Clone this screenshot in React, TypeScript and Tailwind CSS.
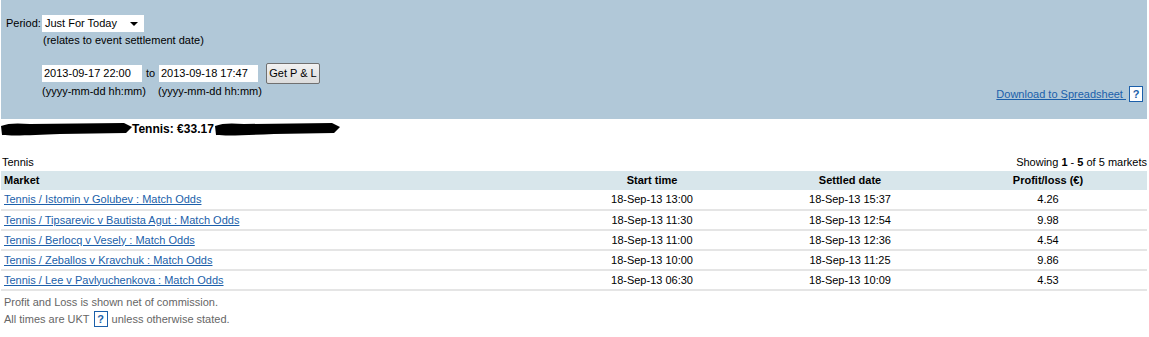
import React from 'react';

const rows = [
  { market: 'Tennis / Istomin v Golubev : Match Odds', start: '18-Sep-13 13:00', settled: '18-Sep-13 15:37', pl: '4.26' },
  { market: 'Tennis / Tipsarevic v Bautista Agut : Match Odds', start: '18-Sep-13 11:30', settled: '18-Sep-13 12:54', pl: '9.98' },
  { market: 'Tennis / Berlocq v Vesely : Match Odds', start: '18-Sep-13 11:00', settled: '18-Sep-13 12:36', pl: '4.54' },
  { market: 'Tennis / Zeballos v Kravchuk : Match Odds', start: '18-Sep-13 10:00', settled: '18-Sep-13 11:25', pl: '9.86' },
  { market: 'Tennis / Lee v Pavlyuchenkova : Match Odds', start: '18-Sep-13 06:30', settled: '18-Sep-13 10:09', pl: '4.53' },
];

const HelpBox: React.FC = () => (
  <span className="inline-flex h-[16px] w-[14px] items-center justify-center border border-[#1b5faa] bg-white text-[11px] font-bold leading-none text-[#1b5faa]">
    ?
  </span>
);

// redacted ink marks over the account name
const Scribble: React.FC<{ width: number }> = ({ width }) => (
  <svg width={width} height="15" viewBox={`0 0 ${width} 15`} className="block">
    <path
      d={`M1 4 C 8 1, 18 1, 30 2 L ${width - 8} 1 L ${width} 5 L ${width - 6} 11 L 60 12 C 35 13, 15 14, 2 13 Z`}
      fill="#000"
    />
  </svg>
);

export default function App() {
  return (
    <div className="w-[1149px] bg-white text-[11px] leading-[13px] text-black" style={{ fontFamily: '"Liberation Sans", Arial, sans-serif' }}>
      <div className="ml-px mr-[2px] h-[119px] bg-[#b1c8d8] pt-[15px]">
        <div className="flex items-center">
          <span className="ml-[5px] w-[36px]">Period:</span>
          <div className="flex h-[17px] w-[102px] items-center justify-between bg-white pl-[3px] pr-[6px]">
            <span>Just For Today</span>
            <svg width="8" height="4" viewBox="0 0 8 4"><path d="M0 0 H8 L4 4 Z" fill="#000" /></svg>
          </div>
        </div>
        <div className="ml-[42px] mt-[2px]">(relates to event settlement date)</div>
        <div className="flex items-end justify-between pr-[4px]">
          <div className="ml-[41px] mt-[16px]">
            <div className="flex items-center">
              <div className="flex h-[17px] w-[100px] items-center bg-white pl-[2px]">2013-09-17 22:00</div>
              <span className="ml-[4px] w-[13px]">to</span>
              <div className="flex h-[17px] w-[99px] items-center bg-white pl-[2px]">2013-09-18 17:47</div>
              <button className="ml-[8px] h-[21px] w-[54px] rounded-[2px] border border-[#707070] bg-gradient-to-b from-[#f2f2f2] to-[#dcdcdc] text-[11px]">
                Get P &amp; L
              </button>
            </div>
            <div className="mt-[1px] flex">
              <span className="w-[116px]">(yyyy-mm-dd hh:mm)</span>
              <span>(yyyy-mm-dd hh:mm)</span>
            </div>
          </div>
          <div className="mb-[-4px] flex items-center gap-[3px]">
            <a className="cursor-pointer text-[#1b5faa] underline">Download to Spreadsheet&nbsp;</a>
            <HelpBox />
          </div>
        </div>
      </div>

      <div className="mt-[3px] flex items-center">
        <Scribble width={132} />
        <span className="text-[12px] font-bold">Tennis: €33.17</span>
        <Scribble width={126} />
      </div>

      <div className="mt-[19px] flex items-end justify-between px-[2px]">
        <span>Tennis</span>
        <span>
          Showing <b>1</b> - <b>5</b> of 5 markets
        </span>
      </div>

      <table className="ml-px mt-[2px] w-[1146px] border-collapse">
        <thead>
          <tr className="h-[19px] bg-[#d8e6eb] font-bold">
            <th className="pl-[3px] text-left">Market</th>
            <th className="w-[198px] text-center">Start time</th>
            <th className="w-[198px] text-center">Settled date</th>
            <th className="w-[198px] text-center">Profit/loss (€)</th>
          </tr>
        </thead>
        <tbody>
          {rows.map((r) => (
            <tr key={r.market} className="h-[20px] border-b-2 border-[#e5e5e5]">
              <td className="pl-[3px]">
                <a className="cursor-pointer text-[#1b5faa] underline">{r.market}</a>
              </td>
              <td className="text-center">{r.start}</td>
              <td className="text-center">{r.settled}</td>
              <td className="text-center">{r.pl}</td>
            </tr>
          ))}
        </tbody>
      </table>

      <div className="mt-[5px] pl-[4px] text-[#666]">
        <div>Profit and Loss is shown net of commission.</div>
        <div className="mt-[2px] flex items-center gap-[4px]">
          <span>All times are UKT</span>
          <HelpBox />
          <span>unless otherwise stated.</span>
        </div>
      </div>
    </div>
  );
}
